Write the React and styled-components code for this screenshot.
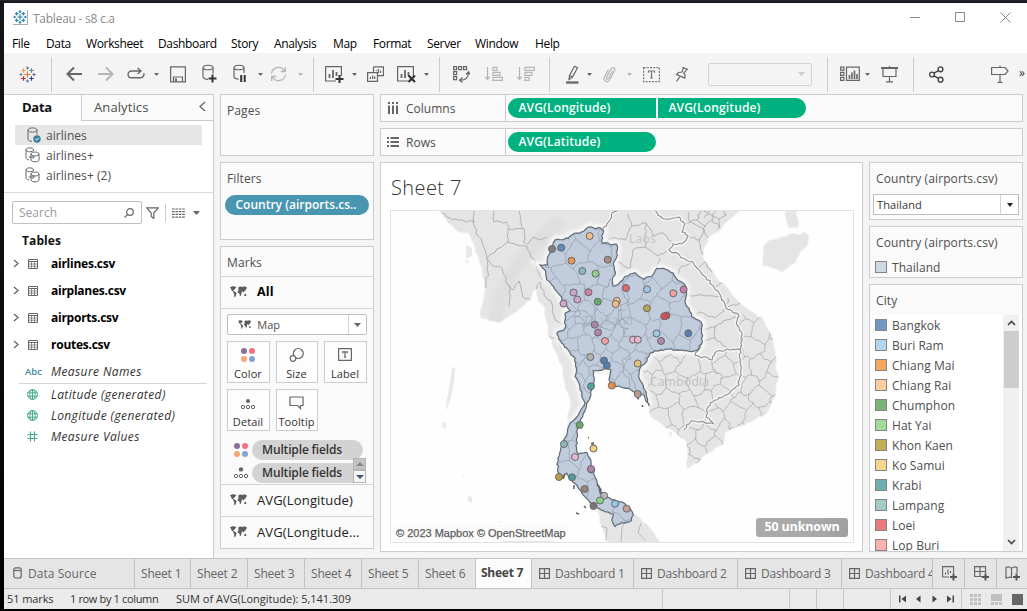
import React from "react";
import styled, { createGlobalStyle } from "styled-components";

const Global = createGlobalStyle`
  * { box-sizing: border-box; }
  html, body { margin: 0; height: 100%; overflow: hidden; }
  body { font-family: "Open Sans", "Noto Sans", sans-serif; font-size: 12px; color: #4e4e4e; background: #0b0b0d; }
  svg { flex: none; }
`;

/* ---------- window frame ---------- */
const Desktop = styled.div`
  width: 1027px; height: 611px; padding: 3px 0 2px 4px; overflow: hidden;
  background: linear-gradient(#24252a, #14141a 3px, #0c0b0b 60%, #000);
`;
const Window = styled.div`
  width: 1023px; height: 606px; display: flex; flex-direction: column; overflow: hidden; background: #f4f4f4;
`;
const TitleBar = styled.div`
  height: 30px; flex: none; background: #fff; display: flex; align-items: center; padding: 0 16px 2px 9px; color: #8b8b8b;
`;
const AppIcon = styled.span`width: 15px; height: 15px; display: flex; align-items: center; justify-content: center; border-right: 1px solid #aaa; border-bottom: 1px solid #aaa;`;
const TitleText = styled.span`margin-left: 5px; font-size: 12px; letter-spacing: -.25px; flex: 1; line-height: 16px; padding-top: 3px;`;
const WinButtons = styled.div`display: flex; gap: 34px; align-items: center;`;
const MenuBar = styled.div`height: 20px; flex: none; background: #fff; display: flex; padding-left: 8px; line-height: 21px; color: #000;`;
const MenuItem = styled.span`width: ${p => p.$w}px; white-space: nowrap; font-size: 12px; letter-spacing: -0.35px;`;
const ToolBar = styled.div`height: 41px; flex: none; display: flex; align-items: center; padding-top: 1px;`;
const Tool = styled.span`display: flex; flex: none; margin-left: ${p => p.$l}px; line-height: 0;`;
const Sep = styled.span`flex: none; width: 1px; height: 35px; background: #ccc; margin-left: ${p => p.$l}px;`;
const EmptyBox = styled.div`
  flex: none; width: 104px; height: 23px; margin-left: 19px; border: 1px solid #d4d4d4; border-radius: 2px;
  display: flex; align-items: center; justify-content: flex-end; padding-right: 6px;
`;
const More = styled.span`margin-left: 10px; font-size: 12px; line-height: 20px; padding-bottom: 2px; color: #333;`;

/* ---------- work area ---------- */
const Work = styled.div`height: 464px; flex: none; display: flex; gap: 6px; padding-right: 4px;`;
const SidePane = styled.div`
  width: 210px; flex: none; background: #fff; border-top: 1px solid #ccc; border-right: 1px solid #ccc;
  display: flex; flex-direction: column; white-space: nowrap;
`;
const PaneTabs = styled.div`height: 26px; display: flex; flex: none;`;
const PaneTab = styled.div`
  width: ${p => p.$w}px; padding-left: ${p => p.$pl}px; line-height: 24px; font-size: 13px;
  letter-spacing: ${p => p.$active ? -0.3 : 0.1}px;
  font-weight: ${p => p.$active ? 700 : 400}; color: ${p => p.$active ? "#111" : "#4e4e4e"};
  ${p => !p.$active && "border-left: 1px solid #ccc; border-bottom: 1px solid #ccc; background: #fafafa;"}
  display: flex; justify-content: space-between; align-items: center; padding-right: 7px; padding-bottom: 2px;
`;
const Sources = styled.div`height: 72px; flex: none; padding: 4px 11px 0; border-bottom: 1px solid #dcdcdc;`;
const Source = styled.div`
  height: 20px; display: flex; align-items: center; padding-left: 10px; gap: 5px; line-height: 19px; letter-spacing: .05px;
  background: ${p => p.$on ? "#e6e6e6" : "transparent"};
`;
const SearchRow = styled.div`height: 23px; margin-top: 8px; padding-left: 8px; display: flex; align-items: center; flex: none;`;
const SearchBox = styled.div`
  width: 130px; height: 23px; border: 1px solid #bfbfbf; border-radius: 2px; color: #9b9b9b; padding: 0 7px 0 6px;
  display: flex; align-items: center; justify-content: space-between; margin-right: 4px;
`;
const SearchDivider = styled.span`width: 1px; height: 18px; background: #ccc; margin: 0 6px;`;
const TablesTitle = styled.div`margin-top: 7px; padding-left: 18px; height: 19px; line-height: 19px; font-weight: 700; color: #111; font-size: 12px; letter-spacing: .1px;`;
const TableRow = styled.div`
  height: 27px; display: flex; align-items: center; padding-left: 9px; font-weight: 700; color: #000; line-height: 20px; letter-spacing: -.25px;
  & > svg:nth-child(2) { margin-left: 9px; margin-right: 13px; }
`;
const FieldRow = styled.div`
  height: ${p => p.$h || 21}px; display: flex; align-items: center; padding: ${p => p.$pt || 0}px 0 0 20px; font-style: italic; color: #333; line-height: 18px; letter-spacing: .4px;
`;
const FieldIcon = styled.span`
  width: 27px; padding-left: ${p => p.$pl || 3}px; display: flex; font: 600 9.5px "Open Sans", sans-serif; color: #4a84a0; letter-spacing: 0;
`;
const FieldRule = styled.div`height: 1px; background: #d4d4d4; margin: 0 6px 0 15px;`;

const ShelfColumn = styled.div`width: 154px; flex: none; display: flex; flex-direction: column; gap: 6px;`;
const Card = styled.div`
  background: #fafafa; border: 1px solid #ccc; height: ${p => p.$h}px; flex: none; overflow: hidden; display: flex; flex-direction: column;
`;
const CardTitle = styled.div`height: ${p => p.$h || 30}px; line-height: 31px; padding-left: 6px; flex: none; letter-spacing: .1px; white-space: nowrap;`;
const FilterPill = styled.div`
  margin: 2px 4px 0; height: 20px; border-radius: 10px; background: #4996b2; color: #fff; padding-left: 10.5px; line-height: 19px; font-weight: 600; letter-spacing: 0; white-space: nowrap;
`;
const MarkRow = styled.div`
  height: 32px; flex: none; border-top: 1px solid #d4d4d4; display: flex; align-items: center; padding-left: 9px; gap: 10px; line-height: 28px; padding-bottom: 1px;
  color: ${p => p.$all ? "#000" : "#222"}; font-weight: ${p => p.$all ? 700 : 400}; font-size: ${p => p.$all ? 12.5 : 13}px; letter-spacing: .15px;
`;
const MarksBody = styled.div`height: 176px; flex: none; border-top: 1px solid #d4d4d4; padding: 5px 6px 0;`;
const MarkSelect = styled.div`
  height: 21px; border: 1px solid #bfbfbf; border-radius: 2px; background: #fff; display: flex; align-items: center; padding-left: 10px; gap: 6px;
  font-size: 11px; line-height: 19px;
`;
const SelectArrow = styled.span`
  margin-left: auto; width: ${p => p.$w || 18}px; height: 100%; border-left: 1px solid #d4d4d4; display: flex; align-items: center; justify-content: center;
`;
const ButtonGrid = styled.div`display: grid; grid-template-columns: 43px 42px 43px; gap: 6px; margin-top: 6px;`;
const MarkButton = styled.div`
  height: 42px; border: 1px solid #ccc; background: #fdfdfd; display: flex; flex-direction: column; align-items: center; justify-content: space-between;
  padding: 5px 1px 1px 0; color: #333; font-size: 11px; line-height: 15px; letter-spacing: .1px;
`;
const PillList = styled.div`display: flex; padding: 9px 0 0 6px;`;
const PillRows = styled.div`display: flex; flex-direction: column; gap: 3px;`;
const PillRow = styled.div`display: flex; align-items: center; height: 20px; gap: 3px;`;
const GreyPill = styled.div`
  width: ${p => p.$cut ? 101 : 111}px; height: 20px; border-radius: ${p => p.$cut ? "10px 0 0 10px" : "10px"}; background: #d3d3d3; color: #333;
  font-weight: 600; padding-left: 10px; line-height: 20px; letter-spacing: -.15px; white-space: nowrap;
`;
const MiniScroll = styled.div`
  margin: 18px 0 0 -10px; width: 13px; height: 25px; display: grid; grid-template-rows: 12px 13px; position: relative;
  & > span { border: 1px solid #b5b5b5; display: flex; align-items: center; justify-content: center; background: #f5f5f5; }
  & > span:first-child { background: #c4c4c4; }
`;

const Main = styled.div`flex: 1; min-width: 0; display: flex; flex-direction: column; gap: 6px;`;
const Shelf = styled.div`height: 28px; flex: none; border: 1px solid #ccc; background: #fafafa; display: flex;`;
const ShelfName = styled.div`width: 125px; border-right: 1px solid #ccc; display: flex; align-items: center; padding-left: 6px; gap: 7px; line-height: 25px;`;
const Pills = styled.div`display: flex; gap: 2px; padding: 3px 0 0 2px;`;
const GreenPill = styled.div`
  width: 148px; height: 20px; background: #00b180; color: #fff; padding-left: 10.5px; font-weight: 600; line-height: 19px; letter-spacing: .15px;
  border-radius: ${p => p.$shape === "left" ? "10px 0 0 10px" : p.$shape === "right" ? "0 10px 10px 0" : "10px"};
`;
const ViewRow = styled.div`display: flex; gap: 6px; flex: 1;`;
const View = styled.div`width: 483px; height: 390px; flex: none; background: #fff; border: 1px solid #ccc; padding: 0 8px 0 9px;`;
const SheetTitle = styled.div`height: 47px; line-height: 50px; font-size: 20px; font-weight: 300; color: #333; letter-spacing: .4px; padding-left: 1px;`;
const MapFrame = styled.div`width: 464px; height: 333px; position: relative; border: 1px solid #e2e2e2; overflow: hidden; & > svg { display: block; margin: -1px; }`;
const Attribution = styled.div`
  position: absolute; left: 2px; bottom: 1px; height: 16px; padding: 0 3px; background: rgba(250,250,250,.85);
  font: 400 11px/16px "Liberation Sans", sans-serif; color: #5e5e5e; -webkit-text-stroke: .25px #5e5e5e; letter-spacing: 0; white-space: nowrap;
`;
const Unknown = styled.div`
  position: absolute; right: 5px; bottom: 5px; width: 92px; height: 19px; border-radius: 3px; background: linear-gradient(100deg, #aaa 60%, #9f9f9f);
  color: #fff; text-align: center; font-weight: 700; font-size: 12.5px; line-height: 18px; letter-spacing: -.15px;
`;
const Legends = styled.div`width: 154px; flex: none; display: flex; flex-direction: column; gap: 6px;`;
const CountrySelect = styled.div`
  margin: 1px 3px 0 3px; height: 21px; border: 1px solid #bfbfbf; background: #fff; color: #333; font-size: 11px; line-height: 19px; padding-left: 3px; display: flex; letter-spacing: .1px;
`;
const LegendRow = styled.div`height: 20px; display: flex; align-items: center; gap: 5px; padding-left: 5px; line-height: 19px; letter-spacing: .05px; white-space: nowrap;`;
const Swatch = styled.span`width: 12px; height: 12px; background: ${p => p.$c}; border: 1px solid #858585;`;
const CityBody = styled.div`display: flex; flex: 1; background: #fff; min-height: 0; padding-right: 3px; & > div:first-child { flex: 1; }`;
const ScrollTrack = styled.div`width: 16px; background: #f0f0f0; display: flex; flex-direction: column; align-items: center; padding: 5px 0 6px;`;
const ScrollThumb = styled.div`width: 15px; height: 57px; background: #cdcdcd; margin: 5px 0 auto;`;

/* ---------- tabs and status ---------- */
const TabStrip = styled.div`height: 31px; flex: none; display: flex; border-top: 1px solid #c4c4c4; border-bottom: 1px solid #c4c4c4; background: #e5e5e5;`;
const SheetTab = styled.div`
  width: ${p => p.$w}px; flex: none; border-right: 1px solid #c4c4c4; padding-left: ${p => p.$pl || 6}px; overflow: hidden; white-space: nowrap;
  display: flex; align-items: center; gap: 5px; color: ${p => p.$active ? "#444" : "#666"}; font-weight: ${p => p.$active ? 700 : 400};
  background: ${p => p.$active ? "#fcfcfc" : "transparent"}; line-height: ${p => p.$active ? 20 : 22}px; letter-spacing: ${p => p.$ls ?? -0.2}px;
  padding-bottom: ${p => p.$active ? 2 : 0}px;
`;
const StatusBar = styled.div`height: 20px; flex: none; background: #eaeaea; display: flex; color: #333; font-size: 11px; line-height: 20px; white-space: nowrap;`;
const StatusText = styled.span`width: ${p => p.$w}px; padding-left: ${p => p.$pl || 0}px; letter-spacing: ${p => p.$ls || 0}px;`;
const StatusCell = styled.span`width: ${p => p.$w}px; border-left: 1px solid #c8c8c8; display: flex; align-items: center; padding-left: ${p => p.$pl || 0}px; gap: ${p => p.$gap || 0}px;`;

/* ---------- icons ---------- */
const Svg = ({ w, h = 20, c = "#666", sw = 1.2, children }) => (
  <svg width={w} height={h} viewBox={`0 0 ${w} ${h}`} fill="none" stroke={c} strokeWidth={sw}>{children}</svg>
);
const Caret = ({ c = "#666", w = 6, h = 4 }) => (
  <svg width={w} height={h} viewBox={`0 0 ${w} ${h}`}><path d={`M0 0H${w}L${w / 2} ${h}Z`} fill={c} /></svg>
);
const Plus = ({ x, y, r = 3.5, c = "#333" }) => <path d={`M${x - r} ${y}h${2 * r}M${x} ${y - r}v${2 * r}`} stroke={c} strokeWidth="2" />;

const LOGO = [[8.5, 8.5, 3.2, "#e8762d"], [8.5, 2, 1.6, "#5c7fa0"], [8.5, 15, 1.6, "#5c7fa0"], [2, 8.5, 1.6, "#6889a6"], [15, 8.5, 1.6, "#6f6aa0"],
  [4.5, 4.5, 2.2, "#eb9a59"], [12.5, 4.5, 2.2, "#59879b"], [4.5, 12.5, 2.2, "#c72037"], [12.5, 12.5, 2.2, "#1f447e"]];
const Logo = ({ mono, s = 17 }) => (
  <svg width={s} height={s} viewBox="0 0 17 17" strokeWidth={mono ? 1.5 : 1.2}>{LOGO.map(([x, y, r, c], i) =>
    <path key={i} stroke={mono ? "#2f86ad" : c} d={`M${x - r} ${y}h${2 * r}M${x} ${y - r}v${2 * r}`} />)}</svg>
);
const Cylinder = () => <path d="M1 3.5v9.5q1 2.2 5 2.3M11 3.5v6M1 3.5c0-3 10-3 10 0s-10 3-10 0" />;
const BarBox = ({ children, w = 19 }) => (
  <Svg w={w}><path d="M11 17H.6V2.6h15.8V12" /><path d="M4.5 14V10M8 14V6M11.5 12V8" strokeWidth="1.8" />{children}</Svg>
);
const World = ({ s = 1 }) => (
  <svg width={17 * s} height={12 * s} viewBox="0 0 17 12" fill="#5c5c5c">
    <path d="M0 1.2L2.3.3 5 .5 6.4 1.5 5 2.6 4.5 3.8 3.2 4 3.9 5.2 5.5 6 6.7 7.1 6 9 5 11.5 4.3 11 4 7.4 2.7 5.2 1.4 4.3 1 2.4Z" />
    <path d="M8.2 1.5L10 .6 12.5 1 14.5.3 17 1.4 16.5 3 15.8 3 15.4 5 14 5.3 13.6 6.7 12.6 5.3 11.8 5.6 11.6 7.2 11 9.5 10 10 9.4 7.6 7.8 6.8 7.7 5 9 4 8.4 3.4ZM14 8.5L15.6 7.8 16.4 9 15.8 10.2 14.2 9.8Z" />
  </svg>
);
const FourDots = () => (
  <svg width="16" height="16" viewBox="0 0 16 16"><circle cx="4" cy="4" r="3" fill="#87719b" /><circle cx="12" cy="4" r="3" fill="#f7707f" />
    <circle cx="4" cy="12" r="3" fill="#f5a778" /><circle cx="12" cy="12" r="3" fill="#85a5ce" /></svg>
);
const DetailIcon = () => (
  <Svg w={16} h={12} sw={1}><circle cx="8" cy="2.4" r="2.2" fill="#666" stroke="none" /><circle cx="3" cy="9" r="1.7" /><circle cx="8" cy="9" r="1.7" /><circle cx="13" cy="9" r="1.7" /></Svg>
);
const GridIcon = () => <Svg w={11} h={11}><path d="M.6.6h9.8v9.8H.6ZM5.5.6v9.8M.6 5.5h9.8" /></Svg>;
const TableIcon = () => <Svg w={10} h={10} sw={1}><path d="M.5.5h9v9h-9ZM.5 2.5h9" /><path d="M.5 5h9M.5 7.2h9M3.5 2.5v7M6.5 2.5v7" strokeWidth=".7" /></Svg>;
const Chevron = () => <Svg w={6} h={9} sw={1.3}><path d="M1 1l4 3.5L1 8" /></Svg>;
const Globe = () => <Svg w={11} h={11} c="#48ab84" sw={1}><circle cx="5.5" cy="5.5" r="4.9" /><path d="M.6 3.8h9.8M.6 7.2h9.8M5.5.6v9.8" /><ellipse cx="5.5" cy="5.5" rx="2.6" ry="4.9" /></Svg>;
const TLetter = ({ s = 1 }) => <path d={`M${-3 * s} ${-1.8 * s}V${-3.5 * s}H${3 * s}V${-1.8 * s}M0 ${-3.5 * s}V${3.5 * s}M${-1.4 * s} ${3.5 * s}H${1.4 * s}`} />;
const JoinedDb = () => <Svg w={16} h={16} sw={1}><path d="M1 2.8v8.5q.8 1.5 3 1.7M8.5 2.8V4M1 2.8C1 .2 8.5.2 8.5 2.8S1 5.4 1 2.8M6 7v6c0 2.4 8 2.4 8 0V7M6 7c0-2.6 8-2.6 8 0s-8 2.6-8 0M3.5 10H9M7.5 8.2L9.3 10 7.5 11.8" /></Svg>;
const AirDb = () => <Svg w={16} h={16} sw={1}><path d="M3 3v9.5q.7 1.7 4 1.9M12 3v4.5M3 3c0-2.8 9-2.8 9 0s-9 2.8-9 0" /><circle cx="12" cy="12" r="3.7" fill="#3b7f9f" stroke="none" /><path d="M10.3 12l1.3 1.2 2.2-2.4" stroke="#fff" /></Svg>;

/* ---------- map geometry ---------- */
const makeRandom = seed => () => ((seed = (seed * 16807) % 2147483647) / 2147483647);
function rough(points, { amp = 0.9, step = 4, closed = true, seed = 7 } = {}) {
  const rnd = makeRandom(seed * 7919 + 13);
  const out = [];
  const n = points.length;
  for (let i = 0; i < (closed ? n : n - 1); i++) {
    const [x1, y1] = points[i], [x2, y2] = points[(i + 1) % n];
    const k = Math.max(1, Math.round(Math.hypot(x2 - x1, y2 - y1) / step));
    for (let j = 0; j < k; j++) {
      const t = j / k, a = j ? amp : 0;
      out.push([x1 + (x2 - x1) * t + (rnd() - 0.5) * 2 * a, y1 + (y2 - y1) * t + (rnd() - 0.5) * 2 * a]);
    }
  }
  if (!closed) out.push(points[n - 1]);
  return "M" + out.map(p => p[0].toFixed(1) + " " + p[1].toFixed(1)).join("L") + (closed ? "Z" : "");
}
/* irregular honeycomb used for province borders */
function mesh(x0, y0, x1, y1, size, seed) {
  const rnd = makeRandom(seed * 104729 + 7);
  rnd();
  const jit = k => (rnd() - 0.5) * size * k;
  const cols = Math.ceil((x1 - x0) / (size * 0.55)) + 1, rows = Math.ceil((y1 - y0) / size) + 1;
  const at = [];
  for (let r = 0; r < rows; r++) for (let c = 0; c < cols; c++)
    at.push([x0 + c * size * 0.55 + jit(0.5), y0 + r * size + ((r + c) % 2 ? 0.17 : -0.17) * size + jit(0.5)]);
  let d = "";
  const edge = (a, b) => {
    const mid = [(a[0] + b[0]) / 2 + jit(0.3), (a[1] + b[1]) / 2 + jit(0.3)];
    d += rough([a, mid, b], { closed: false, step: 2.5, amp: 0.9, seed: Math.floor(rnd() * 9000) + 1 });
  };
  for (let r = 0; r < rows; r++) for (let c = 0; c < cols; c++) {
    const p = at[r * cols + c];
    if (c < cols - 1) edge(p, at[r * cols + c + 1]);
    if (r < rows - 1 && (r + c) % 2) edge(p, at[(r + 1) * cols + c]);
  }
  return d;
}
const P = s => s.split(" ").map(q => q.split(",").map(Number));

const THAILAND = P("590.7,226.7 595.7,229 600,227.7 603.7,231 601.7,236 602.3,243.3 608.3,243.3 611,245 616.7,244.3 617.3,255 614,262 615,275 612.3,280 613.3,286 618.3,284.3 623.7,278 630,274 635,272.7 638.3,276 644.3,279.3 648.3,276.7 653.3,274.3 656.7,268.3 661.7,268.3 668.3,270.3 673.3,273.3 676.7,279 685,285 686.7,293.3 685,301.7 690,311.7 691.7,316.7 698.3,320 702.3,325 701.7,333.3 702.3,341.7 697.7,350 691.7,351.7 681.7,350 668.3,349.3 655,350.7 650,353.3 645,363.3 640,368.3 639,374 640,380 645,390 646.7,396.7 649.3,406 644,395 637,394 628,388.3 619,386 611.7,386.7 609,380 611,370 604,369 593,371 594.3,378 592,387 591,395 586.7,403.3 583.3,413.3 580,421.7 576.7,431.7 576.7,448.3 578.3,454 586.7,452.3 590,458.3 591.7,470 596.7,480 600,491.7 606.7,496.7 615,500 621.7,501.7 630,508.3 633.3,515 630,521.7 621.7,522.7 615,526.7 612.3,521.7 613.3,514 605,511.7 598.3,508.3 593.3,505 586.7,498.3 581.7,493.3 576.7,485 571.7,480 566.7,473.3 560,478.3 557.7,471.7 557.7,458.3 561.7,445 566.7,435 569.3,425 578.3,415 585,403.3 581.7,395 580,386.7 575,376.7 576.7,370 575,358.3 568.3,350 561.7,343.3 556.7,333.3 565,328.3 565,320 565,313.3 570,311 563.3,301.7 558.3,293.3 551.7,285 546.7,280 545,270 540,265 547.7,265 547.7,256.7 551.7,248.3 555,240 568.3,238.3 574.3,233.3 581.7,231.7");
const MAINLAND = P("438,208 448,223 458,232 468,233 475,248 482,268 485,288 482,305 480,317 490,321 502,322 518,310 530,300 535,288 538,302 545,308 548,332 552,345 562,365 565,387 570,400 567,430 580,412 584,400 580,375 640,372 649,407 652,418 665,427 678,435 687,443 687,468 697,463 708,453 723,445 725,432 748,423 767,413 775,397 778,380 775,355 772,335 762,318 742,305 730,292 715,275 703,258 708,238 718,232 732,218 740,208");
const MALAYSIA = P("598,509 600,523 604,533 608,544 661,544 652,530 635,514 625,515 612,515");
const HAINAN = P("763,248 768,241 781,237 793,233 798,235 804,232 809,236 808,244 801,251 796,262 788,268 782,272 772,268 763,266");
const LEIZHOU = P("785,208 796,208 797,217 799,222 798,228 789,228 786,219");

const MAJOR = [
  "653,210 662,218 673,218 679,217 685,224 682,232 688,236 683,243 673,244 669,250 680,256 693,262 697,268 706,277 714,287 721,297 726,308 739,316 737,325 742,335 740,350 741,370 739,385 727,395 715,400 708,407 706,417 714,424 702,421 691,421 684,430",
  "702,343 695,355 708,358 712,360 717,351 730,350 740,349",
  "603,230 610,220 612,213 620,209",
];
const MINOR = [
  "474,210 473,222 477,235 483,245 487,258 488,272 486,288",
  "487,258 495,267 502,268 508,285 513,290 519,281 523,297 530,300", "509,285 510,298 509,307", "508,228 508,242 527,246 541,278 552,289",
  "508,242 488,257", "493,210 494,222 506,222 509,229 524,229 525,244", "527,244 534,237 541,240 547,237", "438,210 450,218 464,221 475,222",
  "534,290 540,282 544,295 552,304 555,320 565,328", "549,336 558,339 562,350", "520,210 523,229",
  "604,244 612,238 625,240 632,226 646,223 653,236 663,233 673,244", "617,262 630,268 633,250 645,247 658,256 669,250", "645,247 646,223", "632,226 628,214", "656,268 660,258",
  "676,279 682,266 694,262", "687,295 705,296 721,297", "691,318 700,312 715,318 726,308", "702,330 716,326 726,320 739,316", "703,341 715,338 722,345 730,350", "716,326 715,338",
  "688,212 690,222 702,228 708,238", "685,224 697,220 705,226 712,220 720,228", "697,220 701,210", "712,220 716,209", "705,226 699,240 703,255", "688,236 699,240", "697,268 705,262 712,272", "714,287 722,283", "726,308 740,303", "726,308 728,298",
  "704,218 710,214 719,219 727,214", "719,219 718,229", "701,210 708,213 712,209", "722,210 725,216",
];
const DOTS = [
  [589.7,236,"#f4bd85"],[561.3,247.7,"#5c85b7"],[552,249,"#807b80"],[571.5,260.7,"#e8964a"],[607.7,259.7,"#a6887b"],[582.3,271,"#86b9b7"],[595.5,273.7,"#8dd184"],
  [573.5,292.5,"#cda2cc"],[588.5,292.3,"#cd7ba0"],[577.3,299.5,"#cda2cc"],[563.5,303.5,"#cda2cc"],[597.7,301.7,"#63a75f"],[616.8,300.8,"#f4bd85"],[615.7,304,"#f4bd85"],
  [594.7,324.7,"#ad7fab"],[598,332.5,"#ad7fab"],[605,341,"#f49f9f"],[590.3,357,"#b5b0ae"],[604,360.5,"#4c79ad"],[606.8,365.5,"#4c79ad"],
  [626,288,"#dd6467"],[647,289.3,"#9ac9e5"],[673.3,293.3,"#f3a0a0"],[683.7,289.5,"#cd7ba0"],[647,308.3,"#b8a248"],[666.5,315.5,"#d84f51"],[664.2,316.3,"#d84f51"],
  [633,339.7,"#e8b5cd"],[637.8,339.7,"#e8b5cd"],[656.5,333.5,"#9ac9e5"],[661,341,"#ad83a9"],[688.3,333.3,"#5079ac"],[637.7,363.5,"#e4c46b"],
  [591,386.3,"#4fa09c"],[611.8,385.5,"#ed8b3c"],[637.7,394,"#bd9789"],[579.7,425,"#63a75f"],[564,444,"#86b9b7"],[593.5,448.5,"#efcf75"],[575,457,"#e8b5cd"],
  [591.2,469.5,"#cda2cc"],[559,477,"#b79b3d"],[572,477.3,"#4b9997"],[584.7,489,"#9a7b70"],[604.2,495.7,"#bdb7b4"],[600,500.5,"#86d17f"],[615,503.7,"#96c6e7"],[626.7,508.7,"#c6a195"],[593.5,506,"#77716f"],[591,469,"#ad83a9"],
];

function ThailandMap() {
  const thai = rough(THAILAND, { amp: 0.9, step: 2.6, seed: 11 });
  const land = rough(MAINLAND, { amp: 1.1, step: 4, seed: 5 });
  const malay = rough(MALAYSIA);
  const major = MAJOR.map((s, i) => rough(P(s), { closed: false, seed: i + 3, amp: 1.2, step: 2.6 })).join("");
  const minor = MINOR.map((s, i) => rough(P(s), { closed: false, seed: i + 31, amp: 1.2, step: 3 })).join("");
  return (
    <svg width="464" height="333" viewBox="390 210 464 333">
      <defs>
        <clipPath id="land"><path d={land} /></clipPath>
        <clipPath id="thai"><path d={thai} /></clipPath>
        <clipPath id="south"><path d="M640 368L655 352 695 354 712 361 718 351 741 350 736 325 739 316 760 310 790 330V480H670L640 410Z" /></clipPath>
        <filter id="soft"><feGaussianBlur stdDeviation="1.4" /></filter>
      </defs>
      <rect x="390" y="210" width="464" height="333" fill="#fefefe" />
      <g fill="#e5e5e5" stroke="#f2f2f2" strokeWidth="1">
        <path d={land} /><path d={malay} /><path d={rough(HAINAN)} /><path d={rough(LEIZHOU)} />
      </g>
      <g fill="#e9e9e9">
        <path d="M452 367l3 1 -1 15 -4 18 -4 10 1 -12 3 -17Z" /><path d="M442 422l4 1 0 5 -3 1Z" /><path d="M468 495l4 2 0 6 -4 -2ZM500 541l20-1 30 0 6 3H505ZM466 245l6 3 0 8 -6 3ZM465 260l4 1 -2 3ZM670 431l2 2 -1 4 -2-3Z" />
        <circle cx="449.5" cy="456" r=".8" /><circle cx="463" cy="477" r=".8" /><circle cx="499" cy="522" r=".8" /><circle cx="722.5" cy="465.5" r=".6" />
      </g>
      <g clipPath="url(#land)" fill="none">
        <path d="M495 325Q500 280 530 250L560 220" stroke="#d8d8d8" strokeWidth="14" opacity=".4" filter="url(#soft)" />
        <path d={minor} stroke="#acacac" strokeWidth=".9" />
        <g clipPath="url(#south)"><path d={mesh(640, 306, 795, 480, 17, 29)} stroke="#acacac" strokeWidth=".8" /></g>
        <path d={thai} stroke="#fafafa" strokeWidth="8" opacity=".8" filter="url(#soft)" />
        <path d={major} stroke="#fafafa" strokeWidth="4" opacity=".75" />
        <path d={major} stroke="#8f8f8f" strokeWidth="1.1" />
      </g>
      <path d="M627 514L622 528 621 543M641 523L638 533 646 541M601 526L607 528 606 541" fill="none" stroke="#b4b4b4" strokeWidth=".9" />
      <path d={thai} fill="#c1cddc" />
      <g clipPath="url(#thai)" fill="none">
        <g stroke="#95a2b1" strokeWidth=".8">
          <path d={mesh(545, 228, 622, 310, 19, 19)} />
          <path d={mesh(556, 312, 622, 400, 13, 71)} />
          <path d={mesh(622, 264, 706, 395, 18, 43)} />
          <path d={mesh(554, 404, 636, 530, 19, 91)} />
        </g>
        <path d={thai} stroke="#aebdce" strokeWidth="3" opacity=".7" />
      </g>
      <path d={thai} fill="none" stroke="#5e666f" strokeWidth="1.1" />
      <path d="M588 437.5l1 .5M591 444l2-1 1 4M565 474l-2 5M574 485l0 4M576 513l3 1M584 506l2 2M642 405l1 2M637 398l2 1M597 484l4 6-1 4" fill="none" stroke="#666" strokeWidth="1.6" />
      <g fontFamily="Open Sans, sans-serif" fontSize="12" fill="#9fa8b2" letterSpacing=".3">
        <text x="583" y="325" opacity=".6">Thailand</text>
        <text x="629" y="243" fill="#c4c4c4">Laos</text>
        <text x="650" y="385.5" fill="#c0c0c0">Cambodia</text>
      </g>
      {DOTS.map(([x, y, c], i) => <circle key={i} cx={x} cy={y} r="3.5" fill={c} fillOpacity=".95" stroke="#66696c" strokeWidth="1" />)}
    </svg>
  );
}

const MENU = [["File", 34], ["Data", 40], ["Worksheet", 72], ["Dashboard", 73], ["Story", 43], ["Analysis", 59], ["Map", 40], ["Format", 54], ["Server", 48], ["Window", 60], ["Help", 40]];
const CITIES = [["Bangkok", "#7397c0"], ["Buri Ram", "#b4d5ee"], ["Chiang Mai", "#f4a55f"], ["Chiang Rai", "#fdcda0"], ["Chumphon", "#7cb377"], ["Hat Yai", "#a2da99"], ["Khon Kaen", "#c3ae58"], ["Ko Samui", "#f5d88c"], ["Krabi", "#6eb0ae"], ["Lampang", "#a3cac7"], ["Loei", "#e87b7e"], ["Lop Buri", "#fcb1af"]];

function Toolbar() {
  const lt = "#b5b5b5";
  return (
    <ToolBar>
      <Tool $l={15}><Logo /></Tool><Sep $l={15} />
      <Tool $l={14}><Svg w={16} h={16} sw={2}><path d="M1.5 8H16M8 1.5L1.5 8 8 14.5" /></Svg></Tool>
      <Tool $l={16}><Svg w={16} h={16} sw={2} c={lt}><path d="M0 8h14.5M8 1.5L14.5 8 8 14.5" /></Svg></Tool>
      <Tool $l={13}><Svg w={18} h={14} sw={1.4}><path d="M14 4H4.5a3.2 3.2 0 0 0 0 6.8h9.2a3.3 3.3 0 0 0 3-4.5M10.5 1L14 4l-3.5 3" /></Svg></Tool>
      <Tool $l={9}><Caret w={5} h={3} /></Tool>
      <Tool $l={11}><Svg w={16} h={17}><path d="M.6 .9h14.8v15H.6ZM3.5 16V11h9v5" /><path d="M6 12.5v3" strokeWidth="2" /></Svg></Tool>
      <Tool $l={16}><Svg w={15}><Cylinder /><Plus x={10.5} y={14.5} r={4} /></Svg></Tool>
      <Tool $l={16}><Svg w={13}><path d="M1 3.5v9.5q1 2 4.5 2.2M11 3.5v5.5M1 3.5c0-3 10-3 10 0s-10 3-10 0" /><path d="M8.2 11v7M11.7 11v7" strokeWidth="2" stroke="#333" /></Svg></Tool>
      <Tool $l={12}><Caret w={5} h={3} /></Tool>
      <Tool $l={7}><Svg w={17} h={18} c={lt} sw={1.3}><path d="M1.5 8.5A7 7 0 0 1 14.5 6M15.5 9.5A7 7 0 0 1 2.5 12M15.3 2v4.5h-4.5M1.7 16v-4.5h4.5" /></Svg></Tool>
      <Tool $l={11}><Caret c={lt} w={5} h={3} /></Tool><Sep $l={10} />
      <Tool $l={11}><BarBox><Plus x={14.5} y={15} r={4} /></BarBox></Tool>
      <Tool $l={8}><Caret w={5} h={3} /></Tool>
      <Tool $l={10}><Svg w={17} h={17}><path d="M6.5 .8h9.9v8.8H11M6.5 6V.8M.6 6.7h9.9v8.7H.6Z" /><path d="M3.5 13v-2M5.6 13v-3.5M7.7 13v-2.7M9.3 5V4M11.4 7V3M13.5 7V4.5" strokeWidth="1.2" /></Svg></Tool>
      <Tool $l={13}><BarBox><path d="M11.5 11.5l6.5 6.5M18 11.5L11.5 18" stroke="#333" strokeWidth="2.2" /></BarBox></Tool>
      <Tool $l={8}><Caret w={5} h={3} /></Tool><Sep $l={10} />
      <Tool $l={13}><Svg w={17} h={18}><path d="M.6 1.6h3v3h-3ZM5.6 1.6h3v3h-3ZM10.6 1.6h3v3h-3ZM.6 6.6h3v3h-3ZM.6 11.6h3v3h-3ZM15.5 7.5Q15.5 15 7 15.3M13 9.5L15.5 6.8 17 9.5M9.5 12.5L6.5 15.3 9.5 17.5" /></Svg></Tool>
      <Tool $l={15}><Svg w={18} h={16} c={lt}><path d="M2.5 1v12M.3 10.5L2.5 13.5 4.7 10.5M8 1.3h4v3H8ZM8 6.3h7v3H8ZM8 11.3h9.4v3H8Z" /></Svg></Tool>
      <Tool $l={14}><Svg w={18} h={16} c={lt}><path d="M2.5 1v12M.3 10.5L2.5 13.5 4.7 10.5M8 1.3h9.4v3H8ZM8 6.3h7v3H8ZM8 11.3h4v3H8Z" /></Svg></Tool>
      <Sep $l={14} />
      <Tool $l={16}><Svg w={13} h={19}><path d="M8.5 1.2l3 1.6L6.5 12 3 14.5 3.5 10.5ZM3.5 10.5L6.5 12" /><path d="M0 17.5h12.5" strokeWidth="2.3" /></Svg></Tool>
      <Tool $l={8}><Caret w={5} h={3} /></Tool>
      <Tool $l={11}><Svg w={13} h={17} c={lt}><path d="M9.5 5L5.5 12.5C4.5 14 2.8 13 3.5 11.5L8 3C9.5.2 13 2 11.5 4.8L6.5 14C4.5 17.3-.3 15 1.5 11L5.5 3.5" /></Svg></Tool>
      <Tool $l={11}><Caret c={lt} w={5} h={3} /></Tool>
      <Tool $l={11}><Svg w={17} h={17} c="#777"><path d="M.6 1.6h15.8v14H.6Z" strokeDasharray="2 1.2" /><g transform="translate(8.5 8.5)"><TLetter /></g></Svg></Tool>
      <Tool $l={15}><Svg w={14} h={17}><path d="M7.5 1.3l5.5 2.2M8.3 1.8L7.2 6 3.5 6.5 1.5 8.5 9.8 12 10 9 8.8 7.2 12 3.2M5 10.3L1.5 15.5" /></Svg></Tool>
      <EmptyBox><Caret c="#ccc" w={7} /></EmptyBox>
      <Sep $l={15} />
      <Tool $l={12}><Svg w={20} h={16}><path d="M.6 1.2h3.3v3H.6ZM.6 6.3h3.3v3H.6ZM.6 11.4h3.3v3H.6ZM6.5 1.2h12.8v13.2H6.5Z" /><path d="M9.5 13V9M12 13V6.5M14.5 13V4.5M17 13V8" strokeWidth="1.6" /></Svg></Tool>
      <Tool $l={5}><Caret w={5} h={3} /></Tool>
      <Tool $l={11}><Svg w={17} h={17}><path d="M0 2h17" strokeWidth="2" /><path d="M2 2v8.5h13V2M8.5 0v2M8.5 10.5v5M5 15.8h7" /></Svg></Tool>
      <Sep $l={15} />
      <Tool $l={15}><Svg w={15} h={17} c="#444" sw={1.4}><circle cx="3" cy="8.5" r="2.4" /><circle cx="11.5" cy="3.3" r="2.4" /><circle cx="11.5" cy="13.7" r="2.4" /><path d="M5 7.2l4.5-2.6M5 9.8l4.5 2.6" /></Svg></Tool>
      <Tool $l={47}><Svg w={18} h={18}><path d="M.6 2.5h13.5L17 6l-2.9 3.5H.6ZM9 .5v2M9 9.5V17M6.5 17.3h5" /></Svg></Tool>
      <More>»</More>
    </ToolBar>
  );
}

export default function App() {
  return (
    <Desktop>
      <Global />
      <Window>
        <TitleBar>
          <AppIcon><Logo mono s={14} /></AppIcon><TitleText>Tableau - s8 c.a</TitleText>
          <WinButtons>
            <Svg w={11} h={11} c="#888" sw={1}><path d="M0 5.5h10" /></Svg>
            <Svg w={11} h={11} c="#888" sw={1}><path d="M.5.5h9v9h-9Z" /></Svg>
            <Svg w={11} h={11} c="#888" sw={1}><path d="M.5.5l10 10M10.5.5l-10 10" /></Svg>
          </WinButtons>
        </TitleBar>
        <MenuBar>{MENU.map(([t, w]) => <MenuItem key={t} $w={w}>{t}</MenuItem>)}</MenuBar>
        <Toolbar />
        <Work>
          <SidePane>
            <PaneTabs>
              <PaneTab $w={77} $pl={18} $active>Data</PaneTab>
              <PaneTab $w={132} $pl={12}>Analytics<Svg w={7} h={11} sw={1.3}><path d="M6 1L1 5.5 6 10" /></Svg></PaneTab>
            </PaneTabs>
            <Sources>
              <Source $on><AirDb />airlines</Source>
              <Source><JoinedDb />airlines+</Source>
              <Source><JoinedDb />airlines+ (2)</Source>
            </Sources>
            <SearchRow>
              <SearchBox>Search<Svg w={10} h={10}><circle cx="6" cy="4" r="3.3" /><path d="M3.7 6.3L.5 9.5" /></Svg></SearchBox>
              <Svg w={13} h={12}><path d="M.8.8h11.4L7.8 6v5.4L5.2 9.5V6Z" /></Svg>
              <SearchDivider />
              <Svg w={13} h={10} sw={1.2}><path d="M0 1h13M0 3.7h13M0 6.4h13M0 9.1h13" strokeDasharray="2.6 .8" /></Svg>
              <Tool $l={8}><Caret w={7} /></Tool>
            </SearchRow>
            <TablesTitle>Tables</TablesTitle>
            {["airlines.csv", "airplanes.csv", "airports.csv", "routes.csv"].map(t => <TableRow key={t}><Chevron /><TableIcon />{t}</TableRow>)}
            <FieldRow $h={25} $pt={2}><FieldIcon $pl={1}>Abc</FieldIcon>Measure Names</FieldRow>
            <FieldRule />
            <FieldRow><FieldIcon><Globe /></FieldIcon>Latitude (generated)</FieldRow>
            <FieldRow><FieldIcon><Globe /></FieldIcon>Longitude (generated)</FieldRow>
            <FieldRow><FieldIcon><Svg w={11} h={11} c="#48ab84"><path d="M3.5 .5v10M7.5 .5v10M.5 3.5h10M.5 7.5h10" /></Svg></FieldIcon>Measure Values</FieldRow>
          </SidePane>

          <ShelfColumn>
            <Card $h={62}><CardTitle>Pages</CardTitle></Card>
            <Card $h={78}><CardTitle>Filters</CardTitle><FilterPill>Country (airports.cs..</FilterPill></Card>
            <Card $h={303}>
              <CardTitle $h={29}>Marks</CardTitle>
              <MarkRow $all><World />All</MarkRow>
              <MarksBody>
                <MarkSelect><World s={0.78} />Map<SelectArrow><Caret w={7} /></SelectArrow></MarkSelect>
                <ButtonGrid>
                  <MarkButton><FourDots />Color</MarkButton>
                  <MarkButton><Svg w={16} h={16}><circle cx="9.3" cy="6.5" r="5" /><circle cx="4" cy="11.5" r="2.8" fill="#fdfdfd" /></Svg>Size</MarkButton>
                  <MarkButton><Svg w={14} h={15}><path d="M.6 1.6h12.8v11.8H.6Z" /><g transform="translate(7 7.5)"><TLetter s={0.75} /></g></Svg>Label</MarkButton>
                  <MarkButton><Svg w={16} h={18} sw={1}><circle cx="8" cy="6" r="2" fill="#666" stroke="none" /><circle cx="3" cy="12" r="1.7" /><circle cx="8" cy="12" r="1.7" /><circle cx="13" cy="12" r="1.7" /></Svg>Detail</MarkButton>
                  <MarkButton><Svg w={15} h={15}><path d="M1 2h13v8.5h-2.5v3L8.5 10.5H1Z" /></Svg>Tooltip</MarkButton>
                </ButtonGrid>
                <PillList>
                  <PillRows>
                    <PillRow><FourDots /><GreyPill>Multiple fields</GreyPill></PillRow>
                    <PillRow><DetailIcon /><GreyPill $cut>Multiple fields</GreyPill></PillRow>
                  </PillRows>
                  <MiniScroll><span><svg width="8" height="4"><path d="M0 4L4 0 8 4Z" fill="#888" /></svg></span><span><Caret w={8} c="#44546a" /></span></MiniScroll>
                </PillList>
              </MarksBody>
              <MarkRow><World />AVG(Longitude)</MarkRow>
              <MarkRow><World />AVG(Longitude...</MarkRow>
            </Card>
          </ShelfColumn>

          <Main>
            <Shelf>
              <ShelfName><Svg w={12} h={12} sw={2}><path d="M2 0v2M6 0v2M10 0v2M2 3.5v8.5M6 3.5v8.5M10 3.5v8.5" /></Svg>Columns</ShelfName>
              <Pills><GreenPill $shape="left">AVG(Longitude)</GreenPill><GreenPill $shape="right">AVG(Longitude)</GreenPill></Pills>
            </Shelf>
            <Shelf>
              <ShelfName><Svg w={12} h={10} sw={2}><path d="M0 1h2M0 5h2M0 9h2M3.5 1H12M3.5 5H12M3.5 9H12" /></Svg>Rows</ShelfName>
              <Pills><GreenPill>AVG(Latitude)</GreenPill></Pills>
            </Shelf>
            <ViewRow>
              <View>
                <SheetTitle>Sheet 7</SheetTitle>
                <MapFrame><ThailandMap /><Attribution>© 2023 Mapbox © OpenStreetMap</Attribution><Unknown>50 unknown</Unknown></MapFrame>
              </View>
              <Legends>
                <Card $h={58}><CardTitle>Country (airports.csv)</CardTitle><CountrySelect>Thailand<SelectArrow><Caret c="#222" /></SelectArrow></CountrySelect></Card>
                <Card $h={52}><CardTitle>Country (airports.csv)</CardTitle><LegendRow><Swatch $c="#cfd8e5" />Thailand</LegendRow></Card>
                <Card $h={268}>
                  <CardTitle>City</CardTitle>
                  <CityBody>
                    <div>{CITIES.map(([n, c]) => <LegendRow key={n}><Swatch $c={c} />{n}</LegendRow>)}</div>
                    <ScrollTrack>
                      <Svg w={9} h={6} c="#444" sw={1.6}><path d="M1 5l3.5-3.5L8 5" /></Svg>
                      <ScrollThumb />
                      <Svg w={9} h={6} c="#444" sw={1.6}><path d="M1 1l3.5 3.5L8 1" /></Svg>
                    </ScrollTrack>
                  </CityBody>
                </Card>
              </Legends>
            </ViewRow>
          </Main>
        </Work>

        <TabStrip>
          <SheetTab $w={131} $pl={9} $ls={0.05}><Svg w={10} h={13}><rect x=".8" y=".8" width="7.4" height="10.2" rx="2" /><path d="M1 3.5h7" /></Svg>Data Source</SheetTab>
          {[1, 2, 3, 4, 5, 6].map(n => <SheetTab key={n} $w={n === 1 ? 56 : 57}>Sheet {n}</SheetTab>)}
          <SheetTab $w={56} $active $pl={5} $ls={-0.25}>Sheet 7</SheetTab>
          {[1, 2, 3].map(n => <SheetTab key={n} $w={n === 1 ? 102 : 104} $pl={7}><GridIcon />Dashboard {n}</SheetTab>)}
          <SheetTab $w={91} $pl={7}><GridIcon />Dashboard 4</SheetTab>
          <SheetTab $w={32} $pl={9}><Svg w={17} h={17} sw={1.1}><path d="M7 12H.6V1.6h11V8M3.5 9.5v-2M6 9.5V4.5M8.5 8V6" /><Plus x={11.5} y={12} r={3.5} c="#555" /></Svg></SheetTab>
          <SheetTab $w={32} $pl={9}><Svg w={17} h={17}><path d="M8 11.5H.6V1.6H11.5V8M6 1.6v10M.6 6.5h11" /><Plus x={11.5} y={12} r={3.5} c="#555" /></Svg></SheetTab>
          <SheetTab $w={31} $pl={8}><Svg w={17} h={17}><path d="M7 13L6 12 1 13V2.5L3.5 1.8 6.5 3.2 9.5 1.8 12 2.5V8M6.5 3.2V12" /><Plus x={11.5} y={12} r={3.5} c="#555" /></Svg></SheetTab>
        </TabStrip>
        <StatusBar>
          <StatusText $w={66} $pl={3} $ls={-0.1}>51 marks</StatusText>
          <StatusText $w={106} $ls={-0.35}>1 row by 1 column</StatusText>
          <StatusText $w={486}>SUM of AVG(Longitude): 5,141.309</StatusText>
          <StatusCell $w={127} /><StatusCell $w={27} /><StatusCell $w={27} /><StatusCell $w={47} />
          <StatusCell $w={71} $pl={8} $gap={9}>
            <svg width="7" height="8" fill="#444"><path d="M0 .5h1.5v7H0ZM7 .5v7L2.5 4Z" /></svg>
            <svg width="7" height="8" fill="#444"><path d="M5.5 .5v7L1 4Z" /></svg>
            <svg width="7" height="8" fill="#444"><path d="M1.5 .5v7L6 4Z" /></svg>
            <svg width="7" height="8" fill="#444"><path d="M0 .5v7L4.5 4ZM5.5 .5H7v7H5.5Z" /></svg>
          </StatusCell>
          <StatusCell $w={65} $pl={8} $gap={10}>
            <svg width="11" height="11" fill="#c0c0c0"><path d="M0 0h3v3H0ZM4 0h3v3H4ZM8 0h3v3H8ZM0 4h3v3H0ZM4 4h3v3H4ZM8 4h3v3H8ZM0 8h3v3H0ZM4 8h3v3H4ZM8 8h3v3H8Z" /></svg>
            <svg width="11" height="11" fill="#c0c0c0"><path d="M0 0h11v7H0ZM0 8h3v3H0ZM4 8h3v3H4ZM8 8h3v3H8Z" /></svg>
            <svg width="11" height="11" fill="#666"><path d="M0 0h11v11H0Z" /></svg>
          </StatusCell>
        </StatusBar>
      </Window>
    </Desktop>
  );
}
